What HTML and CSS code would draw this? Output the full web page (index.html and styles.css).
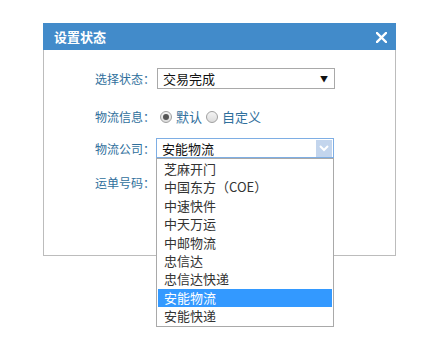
FILE: index.html
```html
<!DOCTYPE html>
<html lang="zh-CN">
<head>
    <meta charset="UTF-8">
    <meta name="viewport" content="width=device-width, initial-scale=1.0">
    <title>设置状态</title>
    <link rel="stylesheet" href="styles.css">
</head>
<body>
    <div class="dialog">
        <div class="dialog-header">
            <span class="dialog-title">设置状态</span>
            <span class="dialog-close">
                <svg width="11" height="11" viewBox="0 0 11 11">
                    <path d="M1 1 L10 10 M10 1 L1 10" stroke="#fff" stroke-width="2.4" stroke-linecap="square"/>
                </svg>
            </span>
        </div>
        <div class="dialog-body">
            <div class="form-row row-status">
                <span class="form-label">选择状态：</span>
                <div class="select">
                    <span class="select-text">交易完成</span>
                    <span class="caret">▼</span>
                </div>
            </div>
            <div class="form-row row-info">
                <span class="form-label">物流信息：</span>
                <span class="radio checked"></span>
                <span class="radio-text">默认</span>
                <span class="radio"></span>
                <span class="radio-text">自定义</span>
            </div>
            <div class="form-row row-company">
                <span class="form-label">物流公司：</span>
                <div class="select select-open">
                    <span class="select-text">安能物流</span>
                    <span class="chevron">
                        <svg width="10" height="7" viewBox="0 0 10 7">
                            <path d="M1 1 L5 5 L9 1" stroke="#fff" stroke-width="2" fill="none"/>
                        </svg>
                    </span>
                    <ul class="dropdown">
                        <li>芝麻开门</li>
                        <li>中国东方（COE）</li>
                        <li>中速快件</li>
                        <li>中天万运</li>
                        <li>中邮物流</li>
                        <li>忠信达</li>
                        <li>忠信达快递</li>
                        <li class="active">安能物流</li>
                        <li>安能快递</li>
                    </ul>
                </div>
            </div>
            <div class="form-row row-number">
                <span class="form-label">运单号码：</span>
                <input class="text-input" type="text">
            </div>
        </div>
    </div>
</body>
</html>
```

FILE: styles.css
```css
html, body {
    height: 100%;
}
body {
    margin: 0;
    min-height: 348px;
    font-family: "Microsoft YaHei", "Noto Sans CJK SC", "Noto Sans", sans-serif;
    background-color: #fff;
    color: #333;
}
.dialog {
    width: 353px;
    padding: 23px 0 0 43px;
}
.dialog-header {
    height: 27px;
    background-color: #428bca;
    display: flex;
    align-items: center;
    justify-content: space-between;
    padding: 0 9px 0 11px;
}
.dialog-title {
    color: #fff;
    font-size: 13px;
    font-weight: bold;
    line-height: 27px;
}
.dialog-close {
    display: flex;
    margin-top: 1px;
}
.dialog-body {
    height: 187px;
    border: 1px solid #bcbcbc;
    border-top: none;
    padding: 18px 0 0 51px;
}
.form-row {
    display: flex;
    align-items: center;
    height: 21px;
}
.row-info {
    margin-top: 17px;
}
.row-company {
    margin-top: 11px;
    height: 20px;
    position: relative;
    z-index: 2;
}
.row-number {
    margin-top: 14px;
}
.form-label {
    width: 62px;
    font-size: 12px;
    line-height: 21px;
    color: #2f6f9c;
    flex-shrink: 0;
}
.select {
    position: relative;
    box-sizing: border-box;
    width: 178px;
    height: 21px;
    border: 1px solid #a9a9a9;
    display: flex;
    align-items: center;
    justify-content: space-between;
    padding: 0 5px 0 5px;
    background-color: #fff;
}
.select-text {
    font-size: 13px;
    line-height: 19px;
    color: #111;
}
.caret {
    font-size: 8px;
    color: #111;
    margin-right: 1px;
}
.select-open {
    margin-left: -1px;
    height: 20px;
    border-color: #7eaee4;
    padding-right: 1px;
}
.chevron {
    width: 16px;
    height: 17px;
    background-color: #c3d5ed;
    display: flex;
    align-items: center;
    justify-content: center;
}
.radio {
    box-sizing: border-box;
    width: 12px;
    height: 12px;
    border-radius: 50%;
    border: 1px solid #a0a0a0;
    background: linear-gradient(#f4f4f4, #dcdcdc);
    margin-left: 3px;
    position: relative;
}
.radio + .radio-text {
    margin-left: 4px;
}
.radio-text {
    font-size: 13px;
    line-height: 21px;
    color: #2f6f9c;
}
.radio-text + .radio {
    margin-left: 4px;
}
.radio.checked::after {
    content: "";
    position: absolute;
    left: 2px;
    top: 2px;
    width: 6px;
    height: 6px;
    border-radius: 50%;
    background-color: #555;
}
.text-input {
    width: 170px;
    height: 19px;
    border: 1px solid #a9a9a9;
    padding: 0;
}
.dropdown {
    position: absolute;
    left: -1px;
    top: 19px;
    width: 176px;
    margin: 0;
    padding: 1px 0 0 0;
    list-style: none;
    background-color: #fff;
    border: 1px solid #a9a9a9;
}
.dropdown li {
    height: 18.4px;
    line-height: 18.4px;
    font-size: 13px;
    color: #333;
    padding-left: 6px;
    margin: 0 1px;
}
.dropdown li.active {
    background-color: #3399ff;
    color: #fff;
}
```
